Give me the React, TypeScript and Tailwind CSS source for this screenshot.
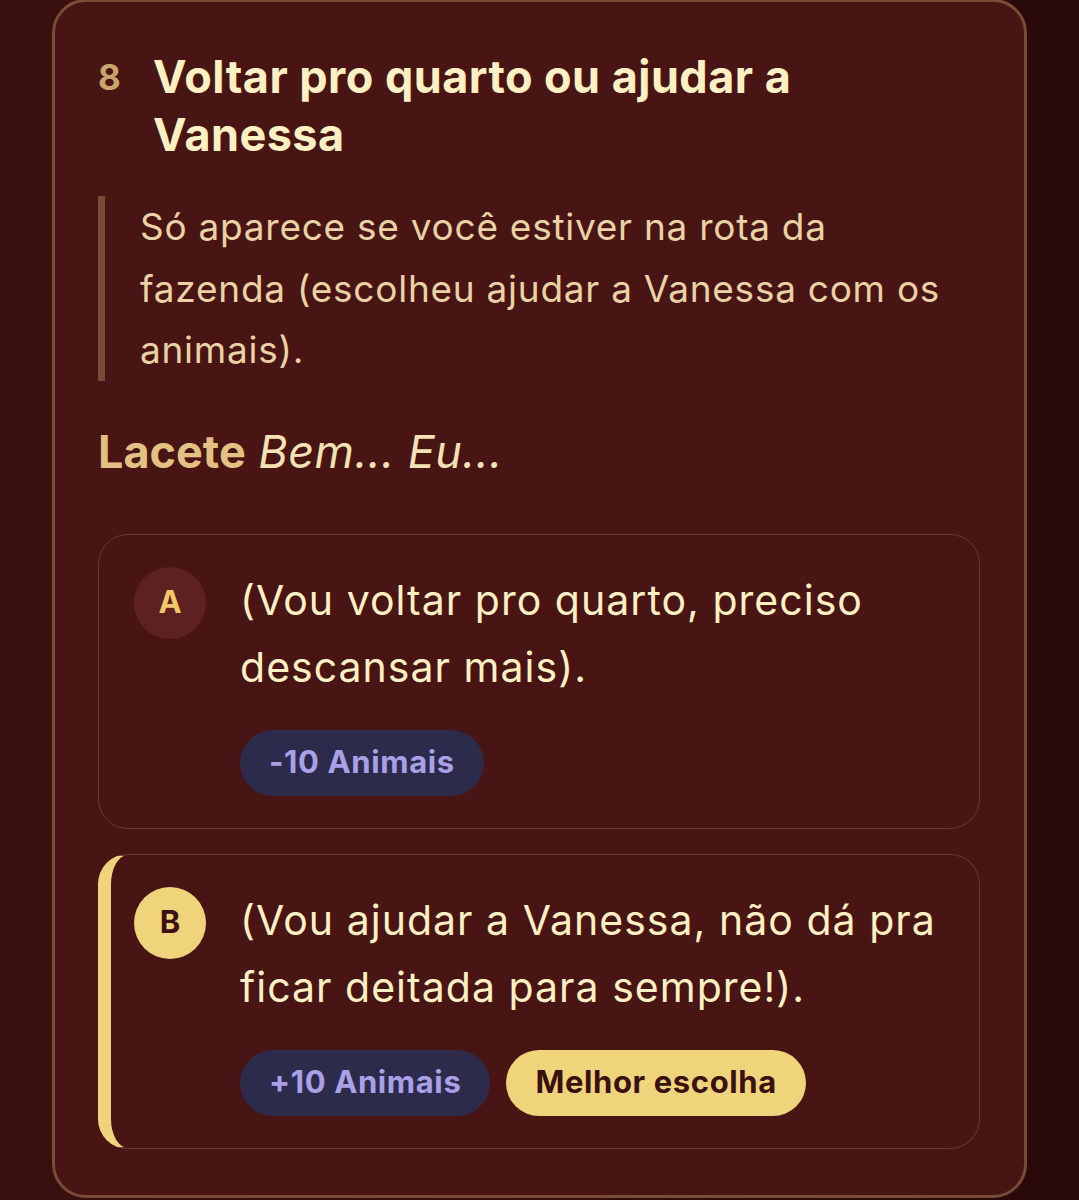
import React from "react";

export default function App() {
  return (
    <div
      className="w-[1079px] h-[1200px] overflow-hidden bg-[linear-gradient(90deg,#3a100f_0%,#330e0d_50%,#280908_100%)]"
      style={{ fontFamily: "Inter, 'Noto Sans', sans-serif" }}
    >
      <div className="ml-[52px] mt-[-1px] w-[975px] h-[1199px] rounded-[34px] border-[3px] border-[#7a4b36] bg-[#481514] pl-[43px] pr-[44px] pt-[46px]">
        {/* Title */}
        <div className="flex items-start">
          <div className="w-[55px] shrink-0 text-[35px] leading-[58px] font-bold text-[#c9a56c]">8</div>
          <h2 className="text-[45px] leading-[58px] font-bold tracking-[0.01em] text-[#fdf0c2] max-w-[760px]">
            Voltar pro quarto ou ajudar a Vanessa
          </h2>
        </div>

        {/* Note */}
        <div className="mt-[33px] mr-[36px] border-l-[7px] border-[#7a4b36] pl-[35px]">
          <p className="text-[37px] leading-[61.5px] tracking-[0.02em] text-[#e9d2a4] -my-[1px]">
            Só aparece se você estiver na rota da fazenda (escolheu ajudar a Vanessa com os animais).
          </p>
        </div>

        {/* Speaker */}
        <div className="mt-[45px] text-[45px] leading-[54px] text-[#f3e2b4]">
          <span className="font-bold text-[#e2c182]">Lacete</span>{" "}
          <span className="italic tracking-[0.01em]">Bem... Eu...</span>
        </div>

        {/* Option A */}
        <div className="mt-[55px] rounded-[30px] border border-[#6a3729] pl-[35px] pr-[35px] pt-[32px] pb-[32px] flex">
          <div className="w-[72px] h-[72px] shrink-0 rounded-full bg-[#5e2121] flex items-center justify-center text-[31px] font-bold text-[#f1c86a]">
            A
          </div>
          <div className="ml-[34px] flex flex-col">
            <p className="text-[41px] leading-[67px] tracking-[0.025em] text-[#fdf0c2]">
              (Vou voltar pro quarto, preciso descansar mais).
            </p>
            <div className="mt-[29px] flex gap-[16px]">
              <span className="h-[66px] px-[29px] rounded-full bg-[#2c2b4b] text-[#a9a0e8] text-[31px] tracking-[0.02em] font-bold flex items-center">
                -10 Animais
              </span>
            </div>
          </div>
        </div>

        {/* Option B */}
        <div className="mt-[25px] rounded-[30px] border border-[#6a3729] border-l-[13px] border-l-[#f0d47b] pl-[23px] pr-[35px] pt-[32px] pb-[32px] flex">
          <div className="w-[72px] h-[72px] shrink-0 rounded-full bg-[#f0d47b] flex items-center justify-center text-[31px] font-bold text-[#3a1010]">
            B
          </div>
          <div className="ml-[34px] flex flex-col">
            <p className="text-[41px] leading-[67px] tracking-[0.025em] text-[#fdf0c2]">
              (Vou ajudar a Vanessa, não dá pra ficar deitada para sempre!).
            </p>
            <div className="mt-[29px] flex gap-[16px]">
              <span className="h-[66px] px-[29px] rounded-full bg-[#2c2b4b] text-[#a9a0e8] text-[31px] tracking-[0.02em] font-bold flex items-center">
                +10 Animais
              </span>
              <span className="h-[66px] px-[29px] rounded-full bg-[#f0d47b] text-[#3a1010] text-[31px] tracking-[0.02em] font-bold flex items-center">
                Melhor escolha
              </span>
            </div>
          </div>
        </div>
      </div>
    </div>
  );
}
